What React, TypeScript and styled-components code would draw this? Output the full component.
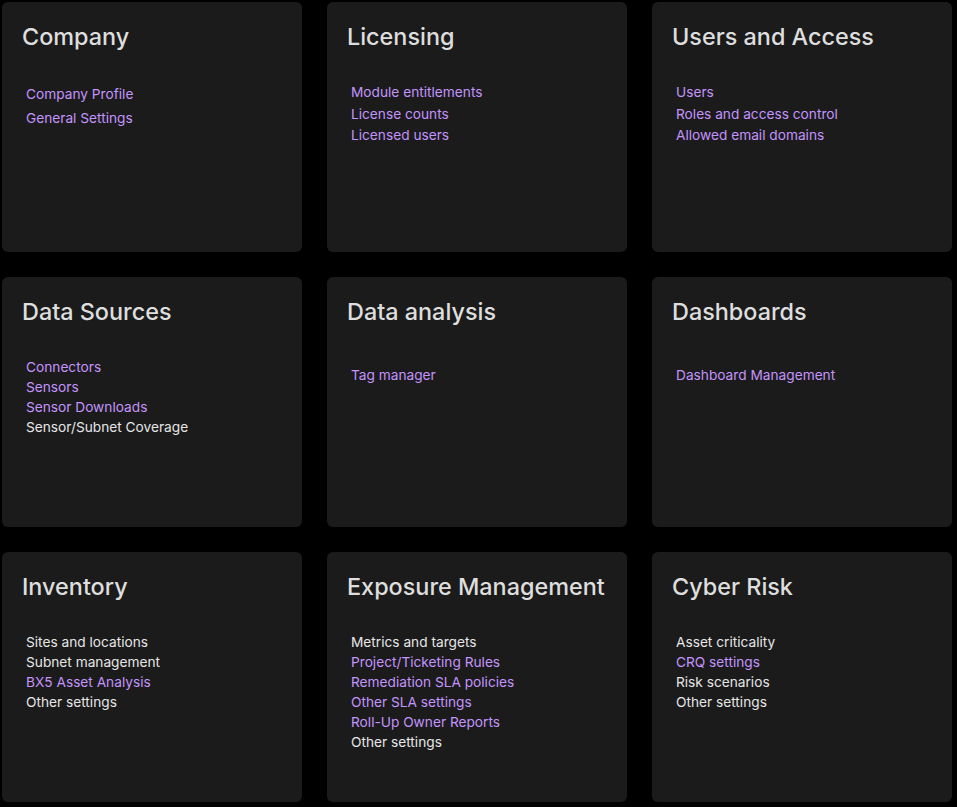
import styled, { createGlobalStyle } from "styled-components";

type Tone = "link" | "plain";
interface IItem {
  label: string;
  tone: Tone;
}
interface ISection {
  title: string;
  items: IItem[];
  lineHeight?: number;
  offset?: number;
}

const link = (label: string): IItem => ({ label, tone: "link" });
const plain = (label: string): IItem => ({ label, tone: "plain" });

const sections: ISection[] = [
  {
    title: "Company",
    items: [link("Company Profile"), link("General Settings")],
    lineHeight: 24,
  },
  {
    title: "Licensing",
    items: [
      link("Module entitlements"),
      link("License counts"),
      link("Licensed users"),
    ],
    lineHeight: 21.5,
  },
  {
    title: "Users and Access",
    items: [
      link("Users"),
      link("Roles and access control"),
      link("Allowed email domains"),
    ],
    lineHeight: 21.5,
  },
  {
    title: "Data Sources",
    items: [
      link("Connectors"),
      link("Sensors"),
      link("Sensor Downloads"),
      plain("Sensor/Subnet Coverage"),
    ],
  },
  { title: "Data analysis", items: [link("Tag manager")], offset: 8 },
  { title: "Dashboards", items: [link("Dashboard Management")], offset: 8 },
  {
    title: "Inventory",
    items: [
      plain("Sites and locations"),
      plain("Subnet management"),
      link("BX5 Asset Analysis"),
      plain("Other settings"),
    ],
  },
  {
    title: "Exposure Management",
    items: [
      plain("Metrics and targets"),
      link("Project/Ticketing Rules"),
      link("Remediation SLA policies"),
      link("Other SLA settings"),
      link("Roll-Up Owner Reports"),
      plain("Other settings"),
    ],
  },
  {
    title: "Cyber Risk",
    items: [
      plain("Asset criticality"),
      link("CRQ settings"),
      plain("Risk scenarios"),
      plain("Other settings"),
    ],
  },
];

const GlobalStyle = createGlobalStyle`
  html, body {
    margin: 0;
    padding: 0;
    background: #000;
  }
  body {
    font-family: Inter, "Noto Sans", "Liberation Sans", sans-serif;
  }
`;

export default function App() {
  return (
    <>
      <GlobalStyle />
      <Grid>
        {sections.map((s) => (
          <Card key={s.title}>
            <Title>{s.title}</Title>
            <List offset={s.offset ?? 0} lineHeight={s.lineHeight ?? 20}>
              {s.items.map((item) => (
                <Item key={item.label} tone={item.tone}>
                  {item.label}
                </Item>
              ))}
            </List>
          </Card>
        ))}
      </Grid>
    </>
  );
}

const Grid = styled.div`
  display: grid;
  grid-template-columns: repeat(3, 300px);
  grid-auto-rows: 250px;
  gap: 25px;
  padding: 2px;
  background: #000;
  min-height: 807px;
  box-sizing: border-box;
`;

const Card = styled.div`
  display: flex;
  flex-direction: column;
  background-color: #1b1b1b;
  border-radius: 6px;
  padding: 20px 20px;
`;

const Title = styled.h2`
  margin: 0;
  font-size: 23.4px;
  line-height: 30px;
  font-weight: 500;
  color: #dedede;
  letter-spacing: 0;
`;

const List = styled.div<{ offset: number; lineHeight: number }>`
  display: flex;
  flex-direction: column;
  margin-top: ${(p) => 30 + p.offset}px;
  padding-left: 4px;
  line-height: ${(p) => p.lineHeight}px;
`;

const Item = styled.a<{ tone: Tone }>`
  font-size: 13.7px;
  color: ${(p) => (p.tone === "link" ? "#c394fb" : "#e6e6e6")};
  cursor: pointer;
  width: fit-content;
`;
